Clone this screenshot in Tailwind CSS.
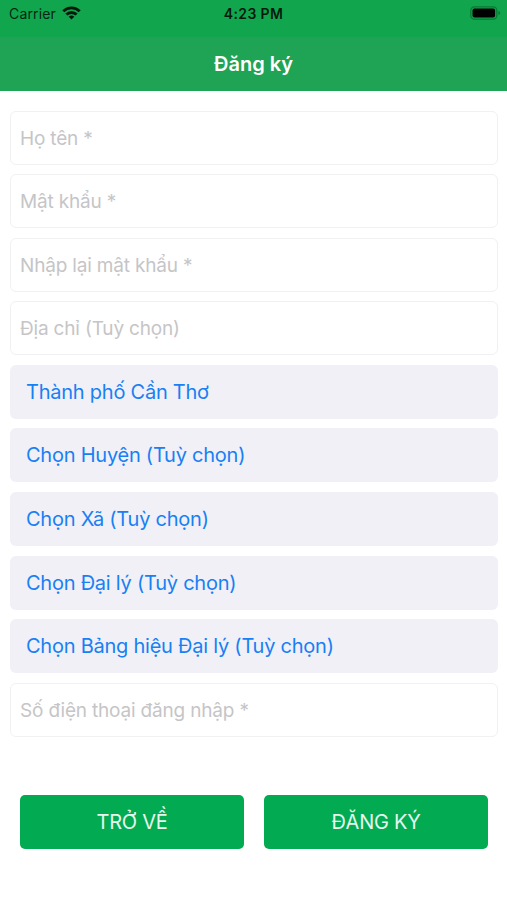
<!DOCTYPE html>
<html lang="vi">
<head>
<meta charset="utf-8">
<meta name="viewport" content="width=device-width, initial-scale=1">
<title>Đăng ký</title>
<script src="https://cdn.jsdelivr.net/npm/@tailwindcss/browser@4"></script>
</head>
<body class="h-[900px] overflow-hidden bg-white font-['Inter',Roboto,sans-serif]">
<header class="h-[91px] bg-[#1fa354] flex flex-col">
  <div class="h-[37px] bg-[#11a54d] grid grid-cols-3 items-start px-[9px] text-black">
    <div class="flex items-center gap-[6px] h-7">
      <span class="text-[14px] leading-7 tracking-[0.15px] text-black/80">Carrier</span>
      <svg class="w-[19px] h-[14px] -mt-[3px]" viewBox="0 0 19 14" fill="none" stroke="#04180b" stroke-width="2.8"><path d="M1.3 5.3a11.6 11.6 0 0 1 16.4 0M4.4 8.6a7.2 7.2 0 0 1 10.2 0"/><path d="M9.5 13.6 6.7 10.8a4 4 0 0 1 5.6 0Z" fill="#04180b" stroke="none"/></svg>
    </div>
    <div class="text-center text-[14px] leading-7 font-semibold tracking-[0.35px] text-black/85">4:23 PM</div>
    <div class="flex justify-end h-[26px] items-center -mr-[3px]">
      <svg class="w-[31px] h-[14px]" viewBox="0 0 31 14"><rect x=".8" y=".8" width="26" height="12.4" rx="3.6" fill="none" stroke="#087a35" stroke-width="1.3"/><rect x="2.5" y="2.5" width="22.6" height="9" rx="2" fill="#000"/><path d="M28.4 4.8v4.4q1.8-.7 1.8-2.2t-1.8-2.2Z" fill="#087a35"/></svg>
    </div>
  </div>
  <h1 class="h-[54px] text-center text-white text-[20px] font-semibold leading-[55px] tracking-[0px]">Đăng ký</h1>
</header>
<main>
  <form class="pl-[10px] pr-[9px] pt-[19.5px]">
    <div class="flex flex-col gap-[9.6px] text-[20px]">
      <input class="block h-[54px] w-full rounded-[6px] border-[1.5px] border-[#f1f1f2] px-[9px] pt-px text-[19px] tracking-[-0.18px] placeholder:text-[#c5c5c7]" placeholder="Họ tên *">
      <input class="block h-[54px] w-full rounded-[6px] border-[1.5px] border-[#f1f1f2] px-[9px] pt-px text-[19px] tracking-[-0.18px] placeholder:text-[#c5c5c7]" placeholder="Mật khẩu *">
      <input class="block h-[54px] w-full rounded-[6px] border-[1.5px] border-[#f1f1f2] px-[9px] pt-px text-[19px] tracking-[-0.18px] placeholder:text-[#c5c5c7]" placeholder="Nhập lại mật khẩu *">
      <input class="block h-[54px] w-full rounded-[6px] border-[1.5px] border-[#f1f1f2] px-[9px] pt-px text-[19px] tracking-[-0.18px] placeholder:text-[#c5c5c7]" placeholder="Địa chỉ (Tuỳ chọn)">
      <button type="button" class="h-[54px] w-full rounded-[6px] bg-[#f0f0f6] px-[16px] text-left tracking-[-0.24px] text-[#1880f5]">Thành phố Cần Thơ</button>
      <button type="button" class="h-[54px] w-full rounded-[6px] bg-[#f0f0f6] px-[16px] text-left tracking-[-0.24px] text-[#1880f5]">Chọn Huyện (Tuỳ chọn)</button>
      <button type="button" class="h-[54px] w-full rounded-[6px] bg-[#f0f0f6] px-[16px] text-left tracking-[-0.24px] text-[#1880f5]">Chọn Xã (Tuỳ chọn)</button>
      <button type="button" class="h-[54px] w-full rounded-[6px] bg-[#f0f0f6] px-[16px] text-left tracking-[-0.24px] text-[#1880f5]">Chọn Đại lý (Tuỳ chọn)</button>
      <button type="button" class="h-[54px] w-full rounded-[6px] bg-[#f0f0f6] px-[16px] text-left tracking-[-0.24px] text-[#1880f5]">Chọn Bảng hiệu Đại lý (Tuỳ chọn)</button>
      <input class="block h-[54px] w-full rounded-[6px] border-[1.5px] border-[#f1f1f2] px-[9px] pt-px text-[19px] tracking-[-0.18px] placeholder:text-[#c5c5c7]" placeholder="Số điện thoại đăng nhập *">
    </div>
    <div class="mt-[58px] grid grid-cols-2 gap-[20px] px-[10px] text-[20px] tracking-[-0.25px] text-white/90">
      <button type="button" class="h-[54px] rounded-[5px] bg-[#02aa51]">TRỞ VỀ</button>
      <button type="button" class="h-[54px] rounded-[5px] bg-[#02aa51]">ĐĂNG KÝ</button>
    </div>
  </form>
</main>
</body>
</html>
